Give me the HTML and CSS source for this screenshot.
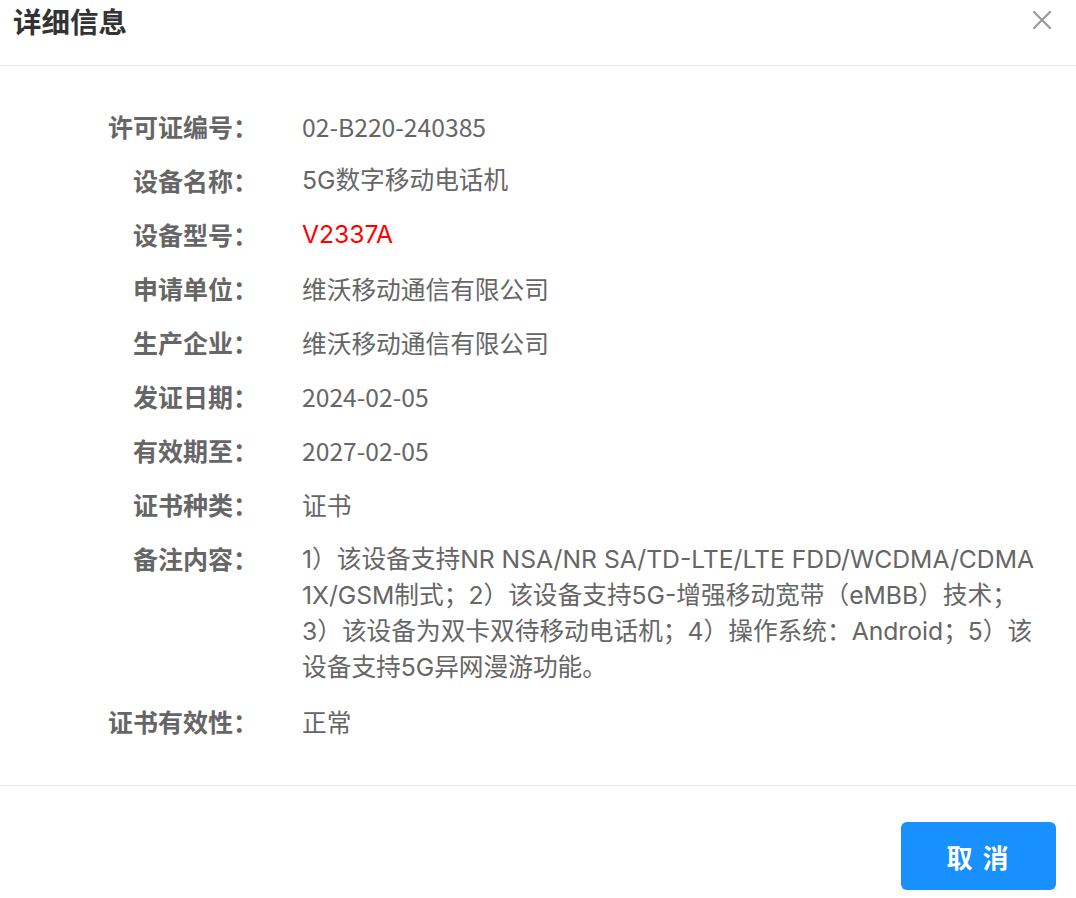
FILE: index.html
```html
<!DOCTYPE html>
<html lang="zh-CN">
<head>
<meta charset="utf-8">
<title>详细信息</title>
<link rel="stylesheet" href="styles.css">
</head>
<body>
<div class="modal">
  <div class="modal-header">
    <h1 class="modal-title">详细信息</h1>
    <button class="close-btn" aria-label="关闭">
      <svg width="18" height="18" viewBox="0 0 18 18"><path d="M1 1L17 17M17 1L1 17" stroke="#999" stroke-width="2.2" stroke-linecap="round" fill="none"/></svg>
    </button>
  </div>
  <div class="modal-body">
    <dl class="info">
      <dt>许可证编号：</dt><dd>02-B220-240385</dd>
      <dt>设备名称：</dt><dd class="latin">5G数字移动电话机</dd>
      <dt>设备型号：</dt><dd class="latin red">V2337A</dd>
      <dt>申请单位：</dt><dd>维沃移动通信有限公司</dd>
      <dt>生产企业：</dt><dd>维沃移动通信有限公司</dd>
      <dt>发证日期：</dt><dd>2024-02-05</dd>
      <dt>有效期至：</dt><dd>2027-02-05</dd>
      <dt>证书种类：</dt><dd>证书</dd>
      <dt>备注内容：</dt><dd class="latin remark">1）该设备支持NR NSA/NR SA/TD-LTE/LTE FDD/WCDMA/CDMA 1X/GSM制式；2）该设备支持5G-增强移动宽带（eMBB）技术；3）该设备为双卡双待移动电话机；4）操作系统：Android；5）该设备支持5G异网漫游功能。</dd>
      <dt>证书有效性：</dt><dd>正常</dd>
    </dl>
  </div>
  <div class="modal-footer">
    <button class="btn-primary">取 消</button>
  </div>
</div>
</body>
</html>
```
FILE: styles.css
```css
* { box-sizing: border-box; }
html, body { margin: 0; padding: 0; background: #fff; }
body {
  font-family: "Noto Sans CJK SC", "Noto Sans", sans-serif;
  color: #666;
  text-spacing-trim: space-all;
}
.modal { width: 1076px; height: 898px; display: flex; flex-direction: column; }
.modal-header {
  height: 66px;
  border-bottom: 1px solid #e8e8e8;
  display: flex;
  align-items: flex-start;
  justify-content: space-between;
  padding: 0 25px 0 13px;
}
.modal-title {
  margin: 0;
  font-size: 28.5px;
  line-height: 42px;
  font-weight: 700;
  color: #333;
}
.close-btn {
  margin-top: 11px;
  padding: 0;
  border: 0;
  background: none;
  width: 18px;
  height: 18px;
  display: block;
}
.close-btn svg { display: block; }
.modal-body {
  flex: 1;
  padding: 43px 28px 0 0;
  border-bottom: 1px solid #e8e8e8;
}
.info {
  margin: 0;
  display: grid;
  grid-template-columns: 258px 1fr;
  column-gap: 44px;
  row-gap: 19px;
  line-height: 35px;
}
.info dt {
  text-align: right;
  font-size: 25px;
  font-weight: 700;
  color: #666;
}
.info dd { margin: 0; color: #666; font-size: 24.7px; }
.info dd.latin { font-family: Inter, "Noto Sans CJK SC", sans-serif; }
.info dd.red { color: #f00; }
.info dd.remark { line-height: 36px; }
.modal-footer {
  height: 112px;
  display: flex;
  justify-content: flex-end;
  align-items: flex-start;
  padding: 36px 20px 0 0;
}
.btn-primary {
  width: 155px;
  height: 68px;
  border: 0;
  border-radius: 6px;
  background: #1890ff;
  color: #fff;
  font-size: 26px;
  font-weight: 700;
  font-family: "Noto Sans CJK SC", sans-serif;
  letter-spacing: 2px;
}
```
